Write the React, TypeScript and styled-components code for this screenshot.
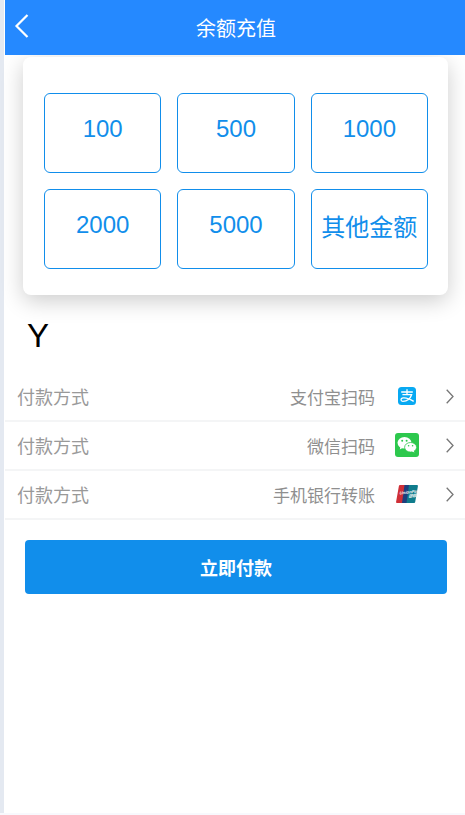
import React from 'react';
import styled, { createGlobalStyle } from 'styled-components';

const cjk = "'Noto Sans CJK SC', 'Liberation Sans', sans-serif";
const latin = "'Liberation Sans', 'Noto Sans CJK SC', sans-serif";

const GlobalStyle = createGlobalStyle`
  html, body {
    margin: 0;
    padding: 0;
    background: #f8f9fd;
  }
`;

const Shell = styled.div`
  box-sizing: border-box;
  width: 465px;
  height: 813px;
  padding-left: 1px;
  border-left: 4px solid #e4e9f1;
  background: #fff;
  font-family: ${cjk};
`;

const Header = styled.div`
  display: flex;
  align-items: center;
  justify-content: center;
  height: 55px;
  padding-left: 2px;
  background: #2589ff;
  color: #fff;
  font-size: 20px;
  position: relative;
`;

const BackLink = styled.a`
  position: absolute;
  left: 9px;
  top: 13px;
  display: flex;
`;

const Card = styled.div`
  display: grid;
  grid-template-columns: repeat(3, 1fr);
  grid-auto-rows: 80px;
  gap: 16px;
  margin: 2px 17px 0 18px;
  padding: 36px 20px 26px 21px;
  background: #fff;
  border-radius: 8px;
  box-shadow: 0 6px 22px rgba(0, 0, 0, 0.2);
`;

const Amount = styled.div`
  display: flex;
  align-items: center;
  justify-content: center;
  box-sizing: border-box;
  padding-bottom: 8px;
  border: 1px solid #118eeb;
  border-radius: 6px;
  color: #118eeb;
  font-family: ${latin};
  font-size: 24px;
  white-space: nowrap;
`;

const Currency = styled.div`
  height: 78px;
  padding: 20px 0 0 22px;
  box-sizing: border-box;
  font-family: ${latin};
  font-size: 33px;
  line-height: 42px;
  color: #000;
`;

const Rows = styled.div`
  display: flex;
  flex-direction: column;
`;

const Row = styled.div`
  display: flex;
  align-items: center;
  height: 49px;
  box-sizing: border-box;
  padding: 0 0 1px 12px;
  border-bottom: 2px solid #f4f5f6;
`;

const RowLabel = styled.span`
  flex: 1;
  font-size: 18px;
  color: #999;
`;

const RowValue = styled.span`
  font-size: 17px;
  color: #8f8f8f;
`;

const IconSlot = styled.span`
  display: flex;
  align-items: center;
  justify-content: center;
  width: 24px;
  height: 24px;
  margin-left: 20px;
`;

const Chevron = styled.span`
  display: flex;
  margin: 0 11px 0 27px;
`;

const PayButton = styled.div`
  display: flex;
  align-items: center;
  justify-content: center;
  height: 54px;
  margin: 20px 18px 0 20px;
  background: #118eeb;
  border-radius: 4px;
  color: #fff;
  font-size: 18px;
  font-weight: 700;
`;

const AlipayIcon = () => (
  <svg width="18" height="18" viewBox="0 0 18 18">
    <rect width="18" height="18" rx="3.5" fill="#08a9f2" />
    <path
      d="M3.2 5h11.600M9 2.200v5.300M4.400 7.700h9.200c-1.300 4.100-5 6.400-8.800 6.600-2.200 0-2.700-2.900.2-3.400 2.800-.4 7.300 1.300 10.700 3.500"
      fill="none"
      stroke="#fff"
      strokeWidth="1.300"
    />
  </svg>
);

const WechatIcon = () => (
  <svg width="24" height="24" viewBox="0 0 24 24">
    <rect width="24" height="24" rx="3" fill="#2dc84d" />
    <ellipse cx="9.500" cy="9.800" rx="7" ry="5.800" fill="#fff" />
    <path d="M5.500 13.500l-.7 3 3-1.700z" fill="#fff" />
    <ellipse cx="15.600" cy="14.300" rx="6" ry="4.800" fill="#fff" stroke="#2dc84d" strokeWidth="0.800" />
    <path d="M18.500 17.500l1 2-2.800-1.200z" fill="#fff" />
    <circle cx="7.200" cy="7.800" r="1" fill="#2dc84d" />
    <circle cx="11.600" cy="7.800" r="1" fill="#2dc84d" />
    <circle cx="13.600" cy="12.800" r="0.800" fill="#2dc84d" />
    <circle cx="17.600" cy="12.800" r="0.800" fill="#2dc84d" />
  </svg>
);

const UnionpayIcon = () => (
  <svg width="22" height="18" viewBox="0 0 22 18">
    <path d="M4 0h6.500L8 18H1.200C.4 18 0 17.500.1 16.700L2.900 1C3 .4 3.400 0 4 0z" fill="#cf2f37" />
    <path d="M8.500 0h6.500L12.500 18H6z" fill="#1d3f7d" />
    <path d="M13 0h7.800c.8 0 1.200.5 1.100 1.300L19.200 17c-.1.600-.5 1-1.100 1H10.500z" fill="#0f7c8c" />
    <g transform="translate(3.500 9.500) skewX(-10) rotate(-6)" fill="#f2f4f5" fontFamily="'Liberation Sans', sans-serif" fontStyle="italic" fontWeight="700" fontSize="4.200">
      <text x="0" y="0">UnionPay</text>
      <text x="9" y="4.200" fontFamily="'Noto Sans CJK SC', sans-serif" fontSize="4">银联</text>
    </g>
  </svg>
);

const ChevronIcon = () => (
  <svg width="8" height="15" viewBox="0 0 8 15">
    <path d="M.7 .8L7 7.500.7 14.200" fill="none" stroke="#777" strokeWidth="1.300" />
  </svg>
);

const amounts = ['100', '500', '1000', '2000', '5000', '其他金额'];

const methods = [
  { value: '支付宝扫码', icon: <AlipayIcon /> },
  { value: '微信扫码', icon: <WechatIcon /> },
  { value: '手机银行转账', icon: <UnionpayIcon /> },
];

const App = () => (
  <Shell>
    <GlobalStyle />
    <Header>
      <BackLink>
        <svg width="16" height="26" viewBox="0 0 16 26">
          <path d="M13.500 2L2.500 13l11 11" fill="none" stroke="#fff" strokeWidth="2.200" />
        </svg>
      </BackLink>
      余额充值
    </Header>
    <Card>
      {amounts.map((a) => (
        <Amount key={a}>{a}</Amount>
      ))}
    </Card>
    <Currency>Y</Currency>
    <Rows>
      {methods.map((m) => (
        <Row key={m.value}>
          <RowLabel>付款方式</RowLabel>
          <RowValue>{m.value}</RowValue>
          <IconSlot>{m.icon}</IconSlot>
          <Chevron>
            <ChevronIcon />
          </Chevron>
        </Row>
      ))}
    </Rows>
    <PayButton>立即付款</PayButton>
  </Shell>
);

export default App;
